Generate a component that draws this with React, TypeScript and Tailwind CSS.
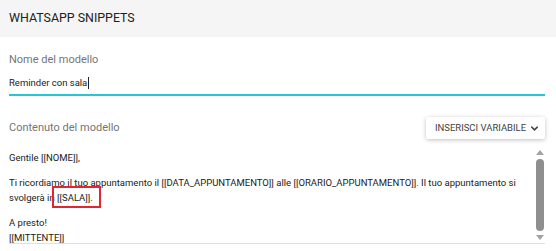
import { ChevronDown } from 'lucide-react';

const font = { fontFamily: 'Roboto, "Noto Sans", sans-serif' };

function Scrollbar() {
	return (
		<div className="flex w-[10px] flex-col items-center py-[3px]">
			<div className="h-0 w-0 border-x-[4px] border-b-[5px] border-x-transparent border-b-[#a3a3a3]" />
			<div className="my-[4px] w-[8px] flex-1 rounded-full bg-[#8f8f8f]" />
			<div className="h-0 w-0 border-x-[4px] border-t-[5px] border-x-transparent border-t-[#a3a3a3]" />
		</div>
	);
}

export default function App() {
	return (
		<div className="h-[251px] w-[556px] overflow-hidden bg-white" style={font}>
			<div className="flex h-[37px] items-center bg-[#f5f5f5] px-[9px]">
				<h1 className="text-[12.4px] text-[#212121]">WHATSAPP SNIPPETS</h1>
			</div>

			<div className="pl-[9px] pr-[11px]">
				<div className="pt-[14px] text-[11px] leading-[18px] text-[#757575]">Nome del modello</div>
				<div className="flex h-[27px] items-center border-b-2 border-[#26c6da] pt-[3px] text-[9.5px] text-[#212121]">
					Reminder con sala
					<span className="ml-[1px] h-[12px] w-px bg-[#212121]" />
				</div>

				<div className="mt-[21px] flex items-center justify-between">
					<span className="text-[11px] text-[#757575]">Contenuto del modello</span>
					<button className="flex h-[22px] w-[119px] items-center justify-center gap-[3px] rounded-[2px] bg-white pl-[4px] text-[9.5px] text-[#424242] shadow-[0_1px_4px_rgba(0,0,0,0.25)]">
						INSERISCI VARIABILE
						<ChevronDown size={11} strokeWidth={3.2} />
					</button>
				</div>

				<div className="mt-[8px] flex h-[97px] justify-between border-b border-[#e0e0e0]">
					<div className="relative pt-[3px] text-[9.5px] leading-[15px] text-[#212121]">
						<div>Gentile [[NOME]],</div>
						<div className="h-[10px]" />
						<div>
							Ti ricordiamo il tuo appuntamento il [[DATA_APPUNTAMENTO]] alle [[ORARIO_APPUNTAMENTO]]. Il tuo appuntamento si
							<br />
							svolgerà in [[SALA]].
						</div>
						<div className="h-[10px]" />
						<div>A presto!</div>
						<div>[[MITTENTE]]</div>
						<div className="absolute left-[43px] top-[39px] h-[22px] w-[49px] border-2 border-[#e3262b]" />
					</div>
					<Scrollbar />
				</div>
			</div>
		</div>
	);
}
